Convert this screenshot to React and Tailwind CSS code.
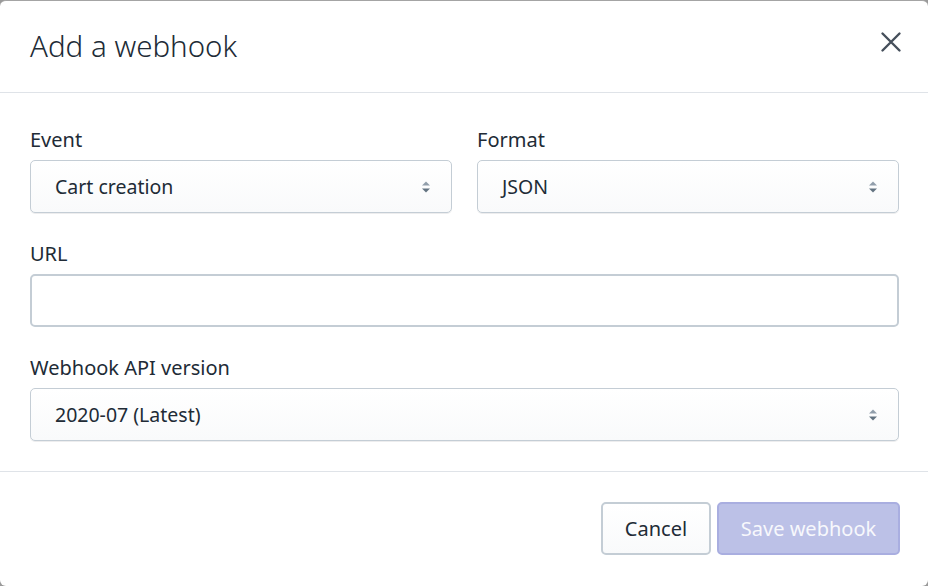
import React from 'react';

function Arrows() {
  return (
    <svg width="12" height="16" viewBox="0 0 12 16" className="shrink-0">
      <path d="M6 2.5 L10 6.5 H2 Z" fill="#919eab" />
      <path d="M6 13.5 L10 9.5 H2 Z" fill="#637381" />
    </svg>
  );
}

function Select({ value }) {
  return (
    <div className="flex h-[53px] items-center justify-between rounded-[5px] border-[1.5px] border-[#c4cdd5] bg-gradient-to-b from-white to-[#f9fafb] pl-[24px] pr-[19px] shadow-[0_1px_0_rgba(22,29,37,0.08)]">
      <span className="text-[19.5px] text-[#212b36]">{value}</span>
      <Arrows />
    </div>
  );
}

function Field({ label, className = '', children }) {
  return (
    <div className={`flex flex-col ${className}`}>
      <label className="mb-[7px] text-[20px] leading-[27px] text-[#212b36]">{label}</label>
      {children}
    </div>
  );
}

export default function App() {
  return (
    <div className="h-[586px] w-[928px] overflow-hidden bg-[#9a9a9a]" style={{ fontFamily: '"Noto Sans", "Open Sans", sans-serif' }}>
      <div className="h-full w-full rounded-[6px] border-t border-[#a4a4a4] bg-white">
        {/* Header */}
        <div className="flex h-[92px] items-center justify-between border-b border-[#dfe3e8] pl-[30px] pr-[26px]">
          <h2 className="text-[29.5px] font-light text-[#212b36]">Add a webhook</h2>
          <svg width="22" height="22" viewBox="0 0 22 22" className="mb-[10px]">
            <path d="M2.5 2.5 L19.5 19.5 M19.5 2.5 L2.5 19.5" stroke="#454f5b" strokeWidth="2.4" strokeLinecap="round" />
          </svg>
        </div>

        {/* Body */}
        <div className="flex flex-col border-b border-[#dfe3e8] pb-[30px] pl-[30px] pr-[29px] pt-[33px]">
          <div className="grid grid-cols-2 gap-[25px]">
            <Field label="Event">
              <Select value="Cart creation" />
            </Field>
            <Field label="Format">
              <Select value="JSON" />
            </Field>
          </div>
          <Field label="URL" className="mt-[27px]">
            <div className="h-[53px] rounded-[5px] border-2 border-[#c4cdd5] bg-white" />
          </Field>
          <Field label="Webhook API version" className="mt-[27px]">
            <Select value="2020-07 (Latest)" />
          </Field>
        </div>

        {/* Footer */}
        <div className="flex justify-end gap-[6px] pl-[30px] pr-[28px] pt-[30px]">
          <button className="h-[53px] w-[110px] rounded-[5px] border-2 border-[#c4cdd5] bg-gradient-to-b from-white to-[#f9fafb] text-[20px] text-[#212b36]">
            Cancel
          </button>
          <button className="h-[53px] w-[183px] rounded-[5px] border-2 border-[#a9aee0] bg-[#bcc1e7] text-[20px] text-[#f7f8fc]">
            Save webhook
          </button>
        </div>
      </div>
    </div>
  );
}
